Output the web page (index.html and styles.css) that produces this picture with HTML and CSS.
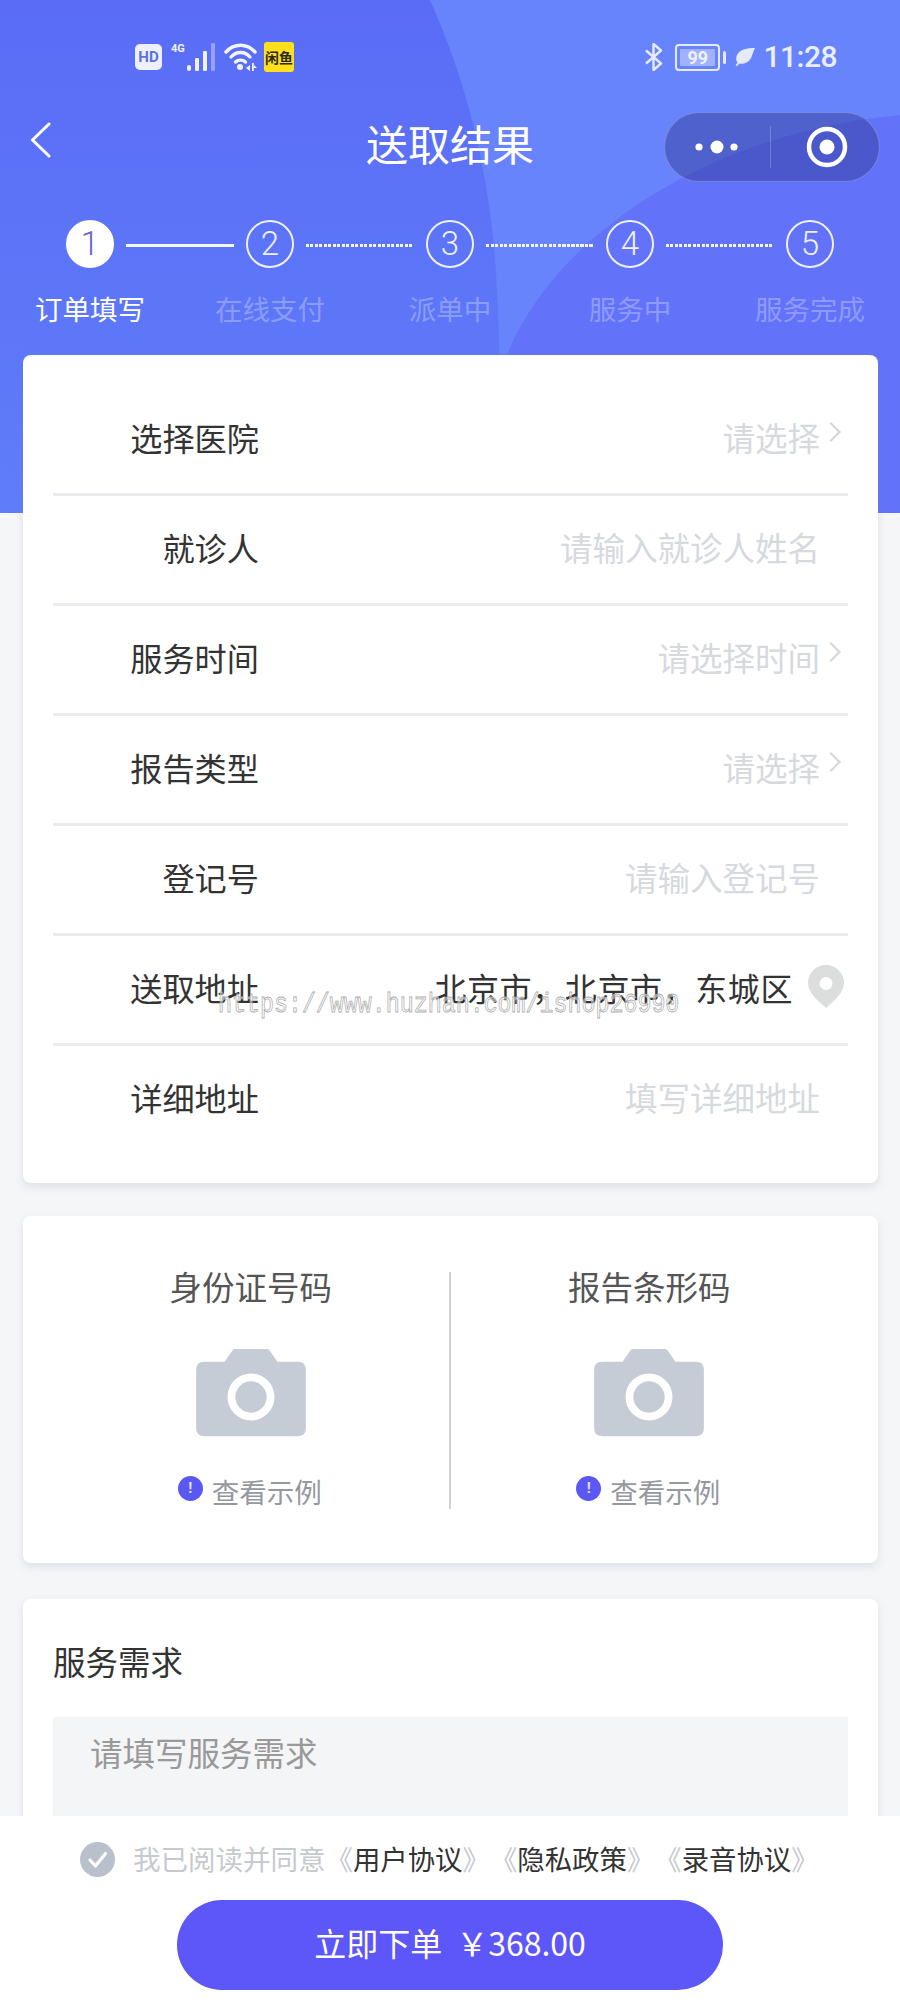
FILE: index.html
```html
<!DOCTYPE html>
<html lang="zh-CN">
<head>
<meta charset="utf-8">
<title>送取结果</title>
<link rel="stylesheet" href="styles.css">
</head>
<body>
<div class="page">
  <svg class="hero-bg" viewBox="0 0 900 513" preserveAspectRatio="none" aria-hidden="true">
    <defs>
      <linearGradient id="base" x1="0" y1="0" x2="0" y2="1">
        <stop offset="0" stop-color="#5a6cf6"/>
        <stop offset="1" stop-color="#5f7df9"/>
      </linearGradient>
    </defs>
    <rect width="900" height="513" fill="url(#base)"/>
    <path d="M430 0C468 85 492 180 497 290C499 330 500 350 503 513H900V0Z" fill="#6884fc"/>
    <path d="M505 360C545 250 690 135 900 115V513H505Z" fill="#6273fa"/>
  </svg>

  <header class="hero">
    <div class="status">
      <div class="status-left">
        <span class="hd">HD</span>
        <span class="signal">
          <span class="net">4G</span>
          <svg class="bars" width="28" height="28" viewBox="0 0 28 28">
            <rect x="0" y="22" width="4" height="6" rx="2" fill="#eef1ff"/>
            <rect x="8" y="15" width="4" height="13" rx="1" fill="#eef1ff"/>
            <rect x="16" y="8" width="4" height="20" rx="1" fill="#eef1ff"/>
            <rect x="24" y="0" width="4" height="28" rx="1" fill="#eef1ff" opacity=".4"/>
          </svg>
        </span>
        <svg class="wifi" width="33" height="28" viewBox="0 0 33 28" fill="none" stroke="#f2f4ff" stroke-width="3.4" stroke-linecap="round">
          <path d="M2 9C10 0 23 0 31 9"/>
          <path d="M7 14C12 8 21 8 26 14"/>
          <path d="M11.500 19C14 16.500 19 16.500 21.500 19"/>
          <circle cx="16" cy="24" r="3" fill="#f2f4ff" stroke="none"/>
          <path d="M22 25l4-3v6zM28 20h1.800v8H28zM30 22l3 3-3 0z" fill="#f2f4ff" stroke="none"/>
        </svg>
        <span class="fish">闲鱼</span>
      </div>
      <div class="status-right">
        <svg class="bt" width="20" height="28" viewBox="0 0 20 28" fill="none" stroke="#e6eaff" stroke-width="2.400" stroke-linejoin="round">
          <path d="M2 7.500L17 20.500L9.500 27V1L17 7.500L2 20.500"/>
        </svg>
        <span class="battery"><span class="battery-level">99</span></span>
        <span class="battery-cap"></span>
        <svg class="leaf" width="20" height="18" viewBox="0 0 20 18">
          <path d="M20 0C12 0 5 1 2 7C0.500 10 1 13 2.500 14.500L0.500 17.500L2 18L4.500 15.500C8 16.500 13 15 15.500 11C17.500 7.500 18 3.500 20 0Z" fill="#e6eaff"/>
        </svg>
        <span class="time">11:28</span>
      </div>
    </div>

    <nav class="nav">
      <div class="nav-left">
        <svg width="21" height="36" viewBox="0 0 21 36" fill="none" stroke="#fff" stroke-width="3" stroke-linecap="round" stroke-linejoin="round">
          <path d="M19 2L2.500 18L19 34"/>
        </svg>
      </div>
      <h1 class="title">送取结果</h1>
      <div class="nav-right">
        <div class="capsule">
          <span class="capsule-part">
            <svg width="44" height="14" viewBox="0 0 44 14" fill="#fff">
              <circle cx="4" cy="7" r="3.600"/><circle cx="22" cy="7" r="6.500"/><circle cx="39" cy="7" r="3.600"/>
            </svg>
          </span>
          <span class="capsule-sep"></span>
          <span class="capsule-part capsule-part-ring">
            <svg width="42" height="42" viewBox="0 0 42 42" fill="none">
              <circle cx="21" cy="21" r="18" stroke="#fff" stroke-width="4.500"/>
              <circle cx="21" cy="21" r="7.500" fill="#fff"/>
            </svg>
          </span>
        </div>
      </div>
    </nav>

    <div class="steps">
      <div class="step-track">
        <span class="dot dot-on">1</span><span class="line"></span>
        <span class="dot">2</span><span class="line line-dash"></span>
        <span class="dot">3</span><span class="line line-dash"></span>
        <span class="dot">4</span><span class="line line-dash"></span>
        <span class="dot">5</span>
      </div>
      <div class="step-labels">
        <span class="step-label step-label-on">订单填写</span>
        <span class="step-label">在线支付</span>
        <span class="step-label">派单中</span>
        <span class="step-label">服务中</span>
        <span class="step-label">服务完成</span>
      </div>
    </div>
  </header>

  <main class="main">
    <section class="card form">
      <div class="row">
        <span class="row-label">选择医院</span>
        <span class="row-value"><span class="hint">请选择</span><span class="chev"></span></span>
      </div>
      <div class="row">
        <span class="row-label">就诊人</span>
        <span class="row-value"><span class="hint hint-input">请输入就诊人姓名</span></span>
      </div>
      <div class="row">
        <span class="row-label">服务时间</span>
        <span class="row-value"><span class="hint">请选择时间</span><span class="chev"></span></span>
      </div>
      <div class="row">
        <span class="row-label">报告类型</span>
        <span class="row-value"><span class="hint">请选择</span><span class="chev"></span></span>
      </div>
      <div class="row">
        <span class="row-label">登记号</span>
        <span class="row-value"><span class="hint hint-input">请输入登记号</span></span>
      </div>
      <div class="row">
        <span class="row-label">送取地址</span>
        <span class="row-value">
          <span class="address">北京市，北京市，东城区</span>
          <svg class="pin" width="36" height="43" viewBox="0 0 36 43">
            <path fill-rule="evenodd" d="M18 0C8 0 0 8 0 18C0 28 11 37 18 43C25 37 36 28 36 18C36 8 28 0 18 0ZM18 12A6.500 6.500 0 1 1 18 25A6.500 6.500 0 1 1 18 12Z" fill="#dcdddd"/>
          </svg>
        </span>
      </div>
      <div class="row">
        <span class="row-label">详细地址</span>
        <span class="row-value"><span class="hint hint-input">填写详细地址</span></span>
      </div>
    </section>

    <section class="card uploads">
      <div class="upload">
        <div class="upload-title">身份证号码</div>
        <svg class="camera" width="114" height="91" viewBox="0 0 112 90">
          <path fill-rule="evenodd" d="M8 13H29L37 1.500Q38 0 40 0H72Q74 0 75 1.500L83 13H104Q112 13 112 21V81Q112 89 104 89H8Q0 89 0 81V21Q0 13 8 13ZM56 25A24 24 0 1 0 56 73A24 24 0 1 0 56 25ZM56 33A16 16 0 1 1 56 65A16 16 0 1 1 56 33Z" fill="#c5ccd6"/>
        </svg>
        <div class="example">
          <span class="bang">!</span><span class="example-text">查看示例</span>
        </div>
      </div>
      <div class="upload">
        <div class="upload-title">报告条形码</div>
        <svg class="camera" width="114" height="91" viewBox="0 0 112 90">
          <path fill-rule="evenodd" d="M8 13H29L37 1.500Q38 0 40 0H72Q74 0 75 1.500L83 13H104Q112 13 112 21V81Q112 89 104 89H8Q0 89 0 81V21Q0 13 8 13ZM56 25A24 24 0 1 0 56 73A24 24 0 1 0 56 25ZM56 33A16 16 0 1 1 56 65A16 16 0 1 1 56 33Z" fill="#c5ccd6"/>
        </svg>
        <div class="example">
          <span class="bang">!</span><span class="example-text">查看示例</span>
        </div>
      </div>
    </section>

    <section class="card need">
      <div class="need-title">服务需求</div>
      <div class="need-box">请填写服务需求</div>
    </section>
  </main>

  <footer class="footer">
    <div class="agree">
      <svg class="check" width="35" height="35" viewBox="0 0 35 35">
        <circle cx="17.500" cy="17.500" r="17.500" fill="#b7c0cb"/>
        <path d="M10 18L15.500 24L25.500 11.500" fill="none" stroke="#fff" stroke-width="3.200" stroke-linecap="round" stroke-linejoin="round"/>
      </svg>
      <span class="agree-text">我已阅读并同意</span>
      <span class="doc"><i class="br">《</i>用户协议<i class="br">》</i></span>
      <span class="doc"><i class="br">《</i>隐私政策<i class="br">》</i></span>
      <span class="doc"><i class="br">《</i>录音协议<i class="br">》</i></span>
    </div>
    <button class="submit" type="button"><span class="submit-text">立即下单<span class="price">￥368.00</span></span></button>
  </footer>

  <div class="watermark">https://www.huzhan.com/ishop26990</div>
</div>
</body>
</html>
```
FILE: styles.css
```css
* { box-sizing: border-box; }
html, body { margin: 0; padding: 0; }
body {
  font-family: "Noto Sans CJK SC", "Noto Sans", sans-serif;
  background: #f5f6f8;
  color: #333;
}
.page {
  position: relative;
  width: 900px;
  height: 2000px;
  overflow: hidden;
  background: #f5f6f8;
}
.hero-bg {
  position: absolute;
  left: 0;
  top: 0;
  width: 900px;
  height: 513px;
}
.hero {
  position: relative;
  height: 355px;
  color: #fff;
}

/* status bar */
.status {
  height: 112px;
  padding: 42px 63px 0 135px;
  display: flex;
  justify-content: space-between;
  align-items: flex-start;
}
.status-left { display: flex; align-items: flex-start; height: 30px; }
.status-right { display: flex; align-items: center; height: 30px; }
.hd {
  width: 27px;
  height: 26px;
  margin-top: 2px;
  border-radius: 5px;
  background: #eef0ff;
  color: #5d70e8;
  font: 700 15px/26px "Roboto", sans-serif;
  text-align: center;
}
.signal { margin-left: 9px; display: flex; align-items: flex-end; height: 29px; }
.net {
  align-self: flex-start;
  width: 16px;
  margin-top: 1px;
  color: #eef1ff;
  font: 700 11px/12px "Roboto", sans-serif;
}
.wifi { margin: 1px 0 0 9px; }
.fish {
  width: 30px;
  height: 30px;
  margin-left: 7px;
  border-radius: 3px;
  background: #ffe01a;
  color: #2b2a1a;
  font-size: 14px;
  font-weight: 700;
  line-height: 30px;
  text-align: center;
}
.bt { margin-right: 11px; }
.battery {
  width: 45px;
  height: 27px;
  padding: 3px;
  border: 2px solid #e6eaff;
  border-radius: 4px;
  display: block;
}
.battery-level {
  display: block;
  width: 100%;
  height: 100%;
  border-radius: 1px;
  background: rgba(230, 234, 255, .45);
  color: #eef1ff;
  font: 700 18px/17px "Roboto", sans-serif;
  text-align: center;
}
.battery-cap {
  width: 3px;
  height: 13px;
  margin: 0 9px 0 3px;
  border-radius: 2px;
  background: #e6eaff;
}
.leaf { margin-right: 8px; }
.time {
  color: #eaeeff;
  font: 500 30px/30px "Roboto", sans-serif;
  letter-spacing: -.5px;
}

/* nav */
.nav {
  height: 70px;
  display: grid;
  grid-template-columns: 1fr auto 1fr;
  align-items: center;
}
.nav-left { margin-bottom: 14px; padding-left: 30px; display: flex; }
.title {
  margin: 0 0 8px;
  font-size: 42px;
  font-weight: 400;
  line-height: 62px;
  color: #fff;
}
.nav-right { display: flex; justify-content: flex-end; padding-right: 20px; }
.capsule {
  width: 216px;
  height: 70px;
  display: flex;
  align-items: center;
  border: 1px solid rgba(255, 255, 255, .25);
  border-radius: 35px;
  background: rgba(48, 56, 150, .46);
}
.capsule-part { flex: 1; display: flex; justify-content: center; align-items: center; }
.capsule-part-ring { padding-left: 4px; }
.capsule-sep { width: 1px; height: 42px; background: rgba(255, 255, 255, .22); }

/* steps */
.steps { margin-top: 38px; }
.step-track {
  padding: 0 66px;
  display: flex;
  align-items: center;
}
.dot {
  width: 48px;
  height: 48px;
  flex: none;
  border: 2px solid #eef1ff;
  border-radius: 50%;
  color: #eef1ff;
  font: 300 33px/44px "Roboto", sans-serif;
  text-align: center;
}
.dot-on { background: #fff; border-color: #fff; color: #6a63d8; }
.line {
  flex: 1;
  height: 3px;
  margin: 2px 12px 0;
  background: #f4f6ff;
}
.line-dash {
  background: repeating-linear-gradient(90deg, #f4f6ff 0 3px, transparent 3px 4.500px);
}
.step-labels {
  margin-top: 20px;
  display: grid;
  grid-template-columns: repeat(5, 180px);
}
.step-label {
  color: rgba(255, 255, 255, .3);
  font-size: 27.500px;
  line-height: 40px;
  text-align: center;
}
.step-label-on { color: #fff; }

/* cards */
.main { position: relative; padding: 0 22px 0 23px; }
.card {
  background: #fff;
  border-radius: 8px;
  box-shadow: 0 4px 8px rgba(120, 130, 150, .18);
}
.form { height: 828px; padding: 31px 30px 0; }
.row {
  height: 110px;
  padding-bottom: 6px;
  display: flex;
  align-items: center;
  justify-content: space-between;
  border-bottom: 3px solid #e9ebee;
}
.row:last-child { padding-bottom: 9px; border-bottom: 0; }
.row-label {
  width: 206px;
  color: #333;
  font-size: 32.200px;
  line-height: 44px;
  text-align: right;
}
.row-value { display: flex; align-items: center; }
.hint {
  color: #d6d9de;
  font-size: 32.500px;
  line-height: 44px;
}
.hint-input { margin-right: 28px; }
.chev {
  width: 14px;
  height: 14px;
  margin: -10px 10px 0 4px;
  border-top: 2px solid #d3d6db;
  border-right: 2px solid #d3d6db;
  transform: rotate(45deg);
}
.address {
  color: #333;
  font-size: 32px;
  letter-spacing: .6px;
  line-height: 44px;
}
.pin { margin: -1px 4px 0 15px; }

.uploads {
  height: 347px;
  margin-top: 33px;
  padding: 56px 30px;
  display: grid;
  grid-template-columns: 1fr 1fr;
}
.upload {
  height: 237px;
  display: flex;
  flex-direction: column;
  align-items: center;
}
.upload:first-child { border-right: 2px solid #cfd2d6; }
.upload-title {
  height: 36px;
  color: #555;
  font-size: 32.500px;
  line-height: 27px;
}
.camera { margin-top: 42px; }
.example {
  margin-top: 36px;
  margin-right: 2px;
  display: flex;
  align-items: center;
  height: 36px;
}
.bang {
  width: 25px;
  height: 25px;
  margin: -5px 9px 0 0;
  border-radius: 50%;
  background: #5b57f2;
  color: #dfe0ff;
  font: 700 15px/25px "Roboto", sans-serif;
  text-align: center;
}
.example-text { color: #95999f; font-size: 27.500px; line-height: 36px; }

.need {
  height: 400px;
  margin-top: 36px;
  padding: 0 30px;
  overflow: hidden;
}
.need-title {
  padding-top: 40px;
  height: 118px;
  color: #333;
  font-size: 32.500px;
  line-height: 44px;
}
.need-box {
  height: 240px;
  padding: 13px 37px;
  background: #f4f5f7;
  color: #999;
  font-size: 32.500px;
  line-height: 44px;
}

/* footer */
.footer {
  position: absolute;
  left: 0;
  right: 0;
  bottom: 0;
  height: 184px;
  background: #fff;
}
.agree {
  height: 84px;
  padding: 0 0 1px 80px;
  display: flex;
  align-items: center;
}
.check { flex: none; margin: 3px 18px 0 0; }
.agree-text { color: #c6c9ce; font-size: 27.500px; line-height: 40px; }
.doc { color: #333; font-size: 27.400px; line-height: 40px; white-space: nowrap; }
.br { color: #c6c9ce; font-style: normal; }
.submit {
  display: block;
  width: 546px;
  height: 90px;
  margin-left: 177px;
  padding: 0 0 6px;
  border: 0;
  border-radius: 45px;
  background: #5d56f9;
  color: #fff;
  font-family: "Noto Sans CJK SC", sans-serif;
  font-size: 32px;
  line-height: 84px;
}
.price { margin-left: 14px; }

.watermark {
  position: absolute;
  left: 218px;
  top: 990px;
  color: rgba(255, 255, 255, .45);
  font: 400 23.300px/30px "Liberation Mono", monospace;
  -webkit-text-stroke: .7px #adadad;
  white-space: nowrap;
  transform: scaleY(1.18);
}
```
